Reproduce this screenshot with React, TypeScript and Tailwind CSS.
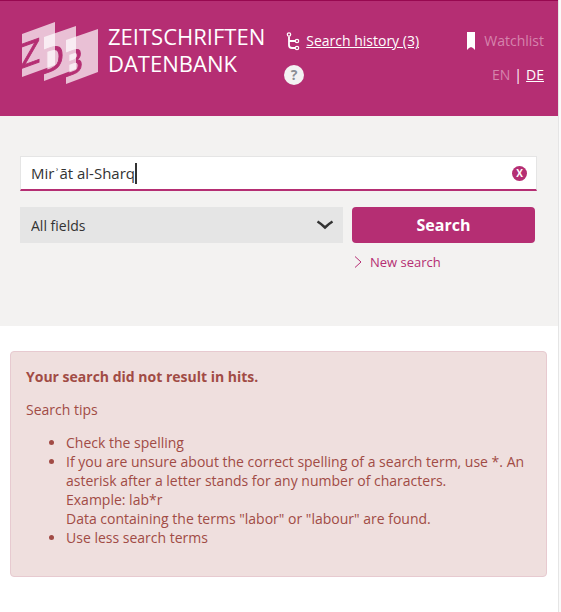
import { useState } from "react";

const area = { maskUnits: "userSpaceOnUse", x: 20, y: 20, width: 80, height: 66 } as const;

const panels = [
  { letter: "Z", d: "M22 34 55 22v43L22 77Z", at: "translate(20 69) skewY(-20)" },
  { letter: "D", d: "M44 37 76 26v43L44 81Z", at: "translate(41 75) skewY(-20)" },
  { letter: "B", d: "M66 40 98 29v43L66 84Z", at: "translate(63 78) skewY(-20)" },
];

function Logo() {
  return (
    <svg width="76" height="62" viewBox="22 22 76 62" className="shrink-0" aria-hidden="true">
      {panels.map(({ letter, d, at }) => (
        <g key={letter}>
          <mask id={`cut-${letter}`} {...area}>
            <rect x="20" y="20" width="80" height="66" fill="#fff" />
            <text
              transform={at}
              fontFamily="'DejaVu Sans Condensed', 'Open Sans', sans-serif"
              fontSize="33"
              fill="#000"
              stroke="#000"
              strokeWidth="1"
            >
              {letter}
            </text>
          </mask>
          <path d={d} fill="#fff" fillOpacity="0.7" mask={`url(#cut-${letter})`} />
        </g>
      ))}
    </svg>
  );
}

function HistoryIcon() {
  return (
    <svg width="14" height="19" viewBox="0 0 14 19" fill="none" stroke="#fff" aria-hidden="true">
      <circle cx="3" cy="2.5" r="1.7" strokeWidth="1.2" />
      <circle cx="11" cy="9" r="1.7" strokeWidth="1.2" />
      <circle cx="11" cy="16" r="1.7" strokeWidth="1.2" />
      <path d="M3 4.5V13q0 3 3 3H9M3 9H9" strokeWidth="1.8" />
    </svg>
  );
}

function Header() {
  return (
    <header className="flex h-[116px] items-start border-t border-[#980850] bg-[#b52e73] pl-[22px] pr-3.5 text-sm leading-5 text-white">
      <a href="#home" className="mt-[21px] flex gap-2.5">
        <Logo />
        <span className="mt-px text-[22px] leading-[27px]">
          <span className="block">ZEITSCHRIFTEN</span>
          <span className="block">DATENBANK</span>
        </span>
      </a>
      <nav className="ml-[19px] mt-[30px] flex flex-1 justify-between">
        <div className="flex flex-col gap-3.5">
          <a href="#history" className="ml-0.5 flex items-center gap-1.5">
            <HistoryIcon />
            <span className="underline">Search history (3)</span>
          </a>
          <button
            type="button"
            aria-label="Help"
            className="flex size-5 items-center justify-center rounded-full bg-[#f3f2f2] text-sm font-bold text-[#8b8f94]"
          >
            ?
          </button>
        </div>
        <div className="flex flex-col items-end gap-3.5">
          <a href="#watchlist" className="flex items-center gap-[9px]">
            <svg width="8" height="18" viewBox="0 0 8 18" fill="#fff" aria-hidden="true">
              <path d="M0 0H8V18L6 16 4 15 2 16 0 18Z" />
            </svg>
            <span className="text-[#d584ad]">Watchlist</span>
          </a>
          <div className="flex gap-1">
            <span className="text-[#d584ad]">EN</span>
            <span>|</span>
            <a href="#de" className="underline">
              DE
            </a>
          </div>
        </div>
      </nav>
    </header>
  );
}

function SearchForm() {
  const [query, setQuery] = useState("Mirʾāt al-Sharq");
  return (
    <form className="h-[210px] bg-[#f3f2f1] pl-5 pr-[21px] pt-10" onSubmit={(e) => e.preventDefault()}>
      <div className="relative">
        <input
          type="text"
          aria-label="Search term"
          value={query}
          onChange={(e) => setQuery(e.target.value)}
          className="block h-[35px] w-full border border-b-2 border-[#e5e5e5] border-b-[#b52e73] bg-white px-2.5 text-[15px] text-[#333] outline-none"
        />
        <span className="absolute left-[115px] top-[7px] h-[21px] w-0.5 bg-[#333]" />
        <button
          type="button"
          aria-label="Clear search"
          onClick={() => setQuery("")}
          className="absolute right-2.5 top-2.5 flex size-[15px] items-center justify-center rounded-full bg-[#b52e73] text-[10px] font-bold text-white"
        >
          X
        </button>
      </div>
      <div className="mt-4 flex items-start gap-[9px] pr-0.5">
        <div className="relative flex-[323]">
          <select
            aria-label="Search field"
            className="block h-9 w-full appearance-none bg-[#e5e5e5] px-[11px] pt-0.5 text-sm text-[#333]"
          >
            <option>All fields</option>
          </select>
          <svg
            width="18"
            height="10"
            viewBox="0 0 18 10"
            fill="none"
            stroke="#333"
            strokeWidth="2.5"
            className="pointer-events-none absolute right-[9px] top-[13px]"
            aria-hidden="true"
          >
            <path d="M1.5 1.5Q5.5 4 9 7.5Q12.5 4 16.5 1.5" />
          </svg>
        </div>
        <div className="flex-[183]">
          <button type="submit" className="h-9 w-full rounded bg-[#b52e73] text-base font-bold text-white">
            Search
          </button>
          <a href="#new" className="mt-2.5 flex items-center gap-2 pl-0.5 text-[13px] leading-[18px] text-[#b52e73]">
            <svg width="8" height="12" viewBox="0 0 8 12" fill="none" stroke="currentColor" aria-hidden="true">
              <path d="M1 0.5 7 6 1 11.5" />
            </svg>
            New search
          </a>
        </div>
      </div>
    </form>
  );
}

export default function App() {
  return (
    <div className="min-h-screen bg-[#fafafa] pr-0.5 font-['Open_Sans','Liberation_Sans',sans-serif]">
      <div className="min-h-screen border-r border-[#e5e5e5] bg-white">
        <Header />
        <main>
          <SearchForm />
          <section className="ml-2.5 mr-[11px] mt-[25px] rounded border border-[#e7cad0] bg-[#efdfde] px-[15px] pb-[29px] pt-[15px] text-sm leading-[19px] text-[#a14b45]">
            <h1 className="font-bold">Your search did not result in hits.</h1>
            <p className="mt-3.5">Search tips</p>
            <ul className="mt-3.5 list-disc pl-10">
              <li>Check the spelling</li>
              <li>
                If you are unsure about the correct spelling of a search term, use *. An asterisk after a letter stands
                for any number of characters.
                <br />
                Example: lab*r
                <br />
                Data containing the terms "labor" or "labour" are found.
              </li>
              <li>Use less search terms</li>
            </ul>
          </section>
        </main>
      </div>
    </div>
  );
}
